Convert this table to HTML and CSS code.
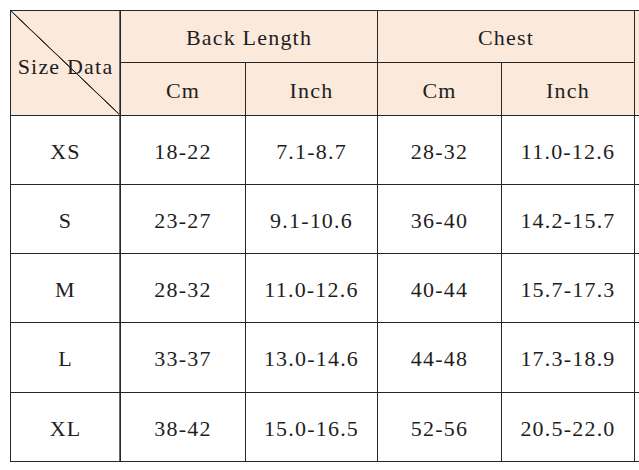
FILE: index.html
```html
<!DOCTYPE html>
<html lang="en">
<head>
<meta charset="utf-8">
<title>Size Chart</title>
<link rel="stylesheet" href="styles.css">
</head>
<body>
<div class="chart">
  <div class="cell head corner">Size Data</div>
  <div class="cell head group g1">Back Length</div>
  <div class="cell head group g2">Chest</div>
  <div class="cell head extra"></div>
  <div class="cell head sub">Cm</div>
  <div class="cell head sub">Inch</div>
  <div class="cell head sub">Cm</div>
  <div class="cell head sub">Inch</div>

  <div class="cell size">XS</div><div class="cell">18-22</div><div class="cell">7.1-8.7</div><div class="cell">28-32</div><div class="cell">11.0-12.6</div><div class="cell"></div>
  <div class="cell size">S</div><div class="cell">23-27</div><div class="cell">9.1-10.6</div><div class="cell">36-40</div><div class="cell">14.2-15.7</div><div class="cell"></div>
  <div class="cell size">M</div><div class="cell">28-32</div><div class="cell">11.0-12.6</div><div class="cell">40-44</div><div class="cell">15.7-17.3</div><div class="cell"></div>
  <div class="cell size">L</div><div class="cell">33-37</div><div class="cell">13.0-14.6</div><div class="cell">44-48</div><div class="cell">17.3-18.9</div><div class="cell"></div>
  <div class="cell size">XL</div><div class="cell">38-42</div><div class="cell">15.0-16.5</div><div class="cell">52-56</div><div class="cell">20.5-22.0</div><div class="cell"></div>
</div>
</body>
</html>
```

FILE: styles.css
```css
html, body {
  margin: 0;
  padding: 0;
  background: #ffffff;
  overflow: hidden;
}
body {
  width: 639px;
  height: 470px;
  padding: 10px 0 0 10px;
  box-sizing: border-box;
}
.chart {
  display: grid;
  grid-template-columns: 109px 124px 131px 123px 132px 4px;
  grid-template-rows: 51px 52px 68px 68px 68px 69px 68px;
  gap: 1px;
  padding: 1px 0 1px 1px;
  background: #262626;
  width: max-content;
  font-family: "Liberation Serif", "Times New Roman", serif;
  font-size: 22px;
  letter-spacing: 1.2px;
  color: #1e1e1e;
}
.cell {
  background: #ffffff;
  display: flex;
  align-items: center;
  justify-content: center;
  padding-top: 3px;
  box-sizing: border-box;
  white-space: nowrap;
}
.head {
  background: #fbe9dc;
}
.corner {
  grid-row: 1 / span 2;
  grid-column: 1;
  padding-top: 8px;
  background: linear-gradient(to top right, #fbe9dc calc(50% - 0.8px), #2a2a2a calc(50% - 0.3px), #2a2a2a calc(50% + 0.3px), #fbe9dc calc(50% + 0.8px));
}
.g1 {
  grid-column: 2 / span 2;
}
.g2 {
  grid-column: 4 / span 2;
}
.extra {
  grid-column: 6;
  grid-row: 1 / span 2;
}
.corner, .size {
  box-shadow: inset -1px 0 0 #6a6a6a;
}
```
